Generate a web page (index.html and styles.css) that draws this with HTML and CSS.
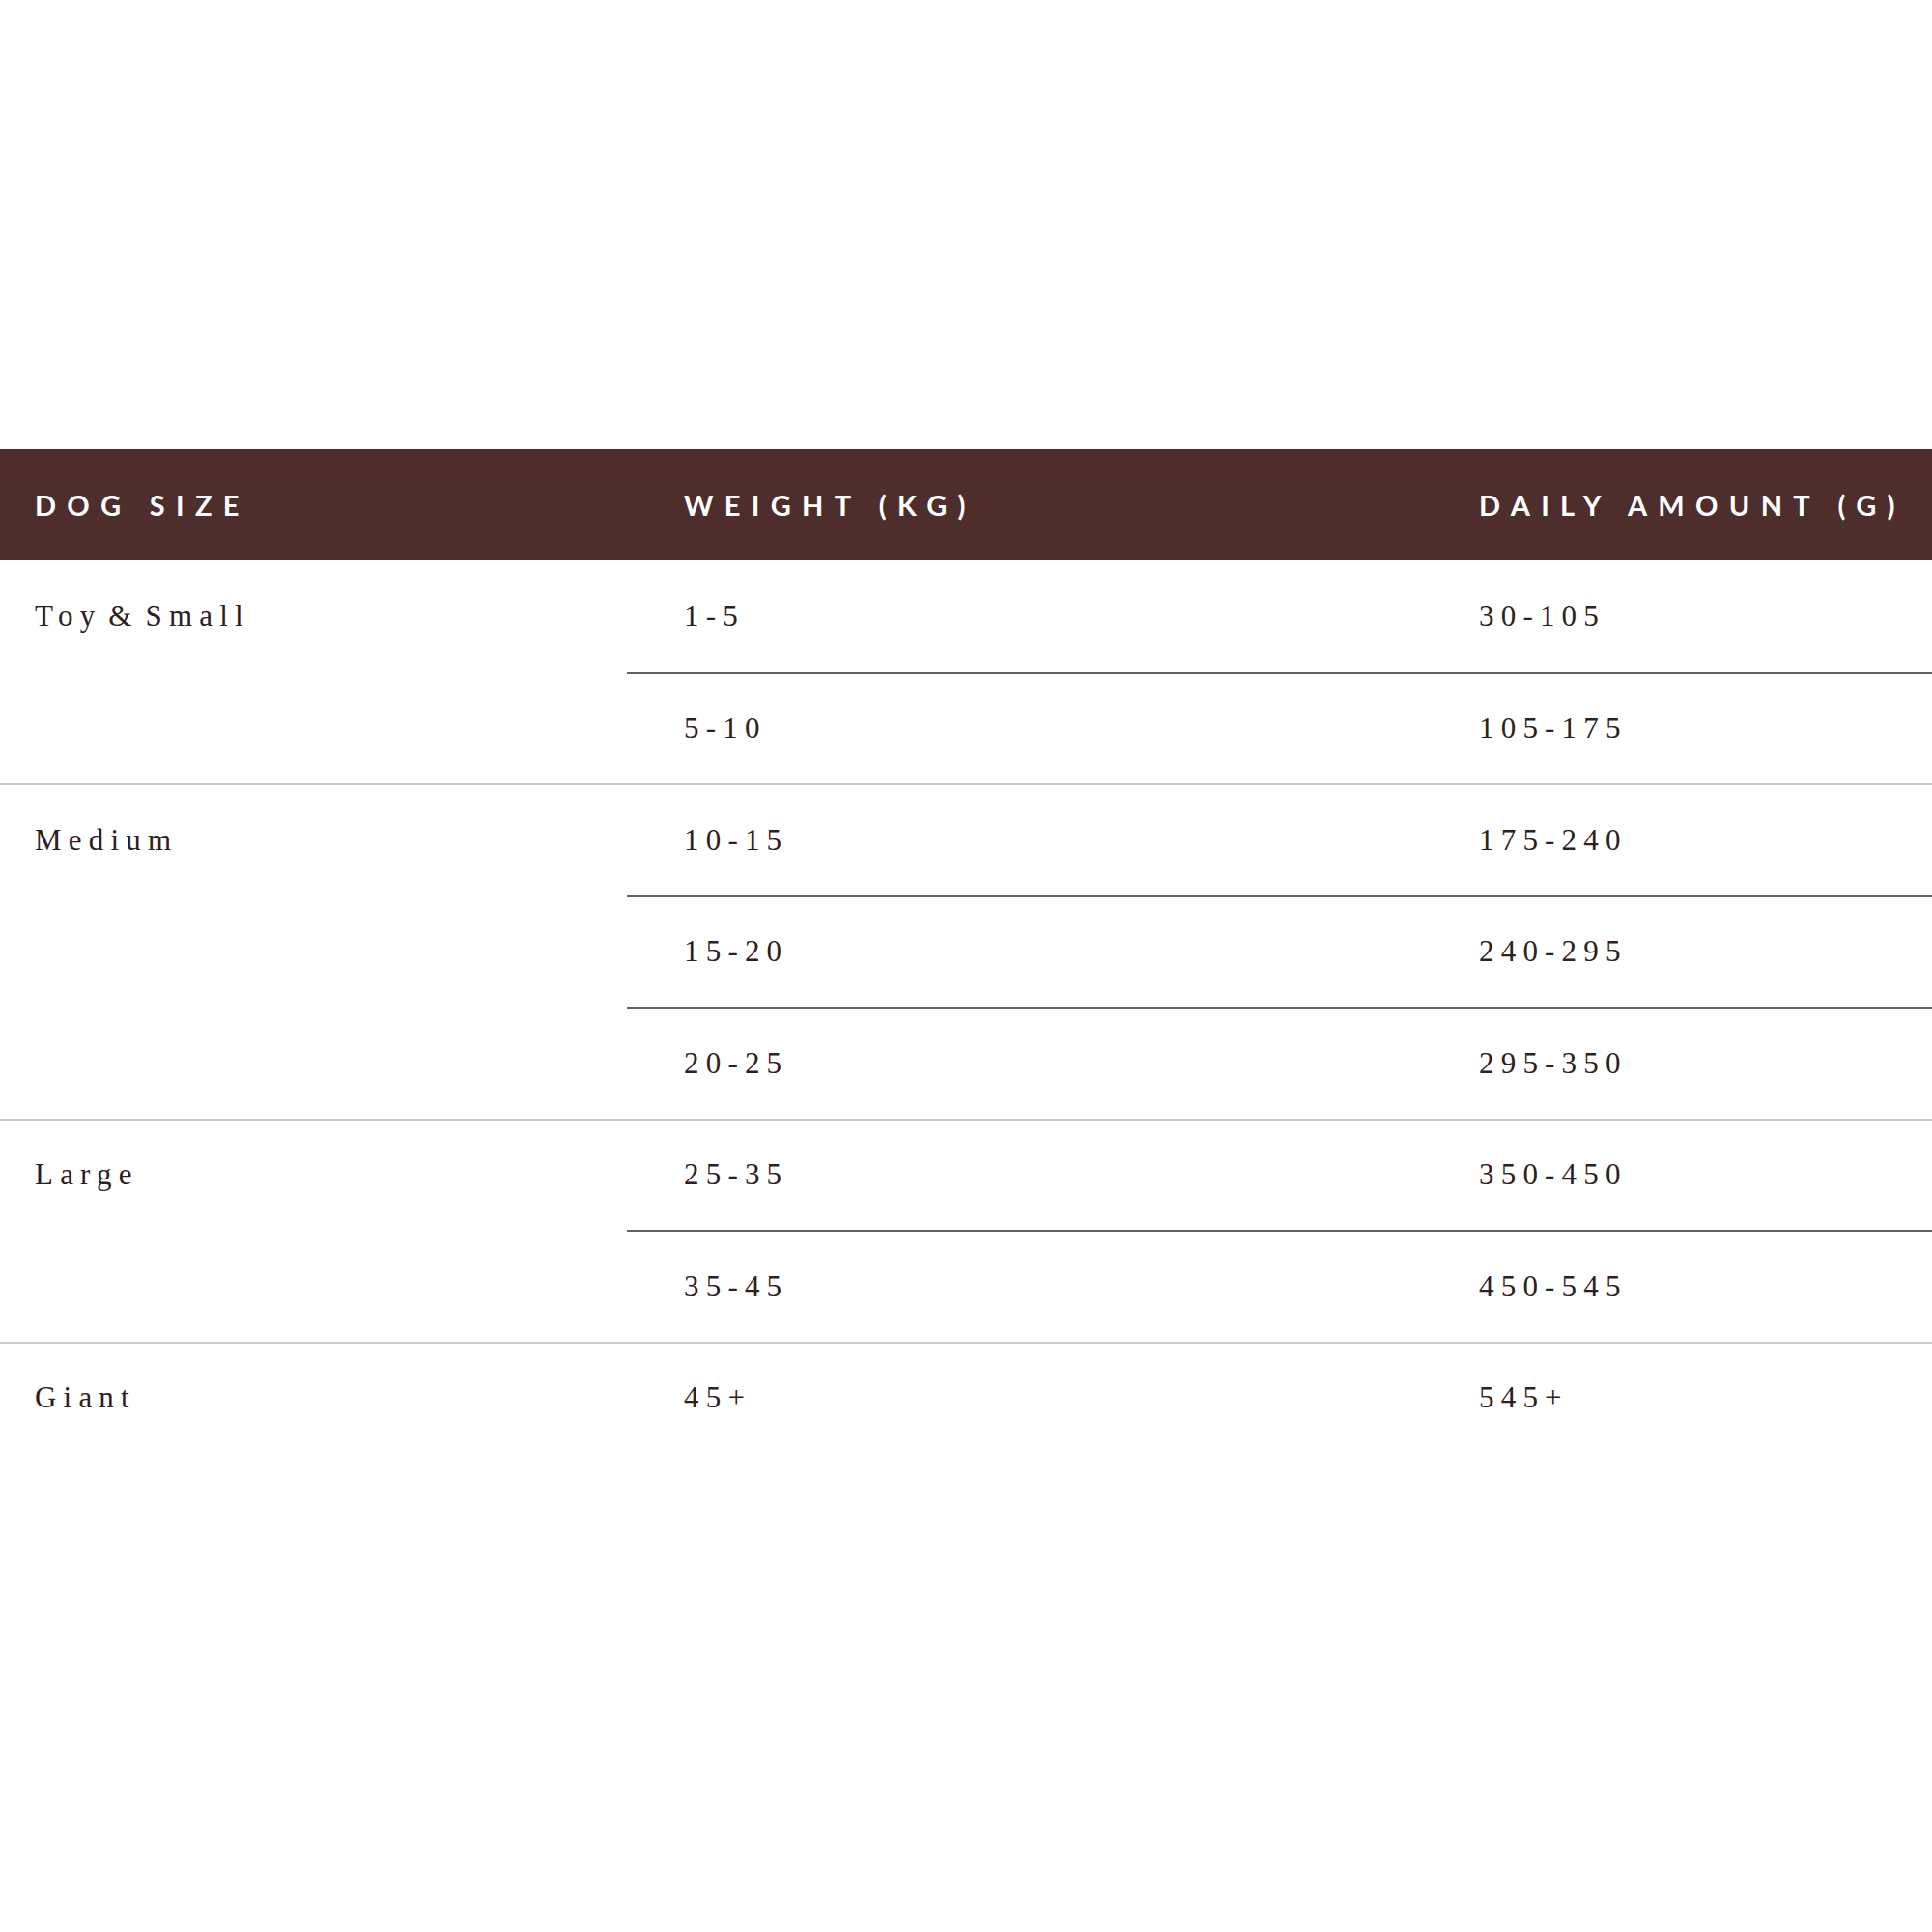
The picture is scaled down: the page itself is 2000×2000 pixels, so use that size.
FILE: index.html
```html
<!DOCTYPE html>
<html lang="en">
<head>
<meta charset="utf-8">
<title>Feeding Guide</title>
<link rel="stylesheet" href="styles.css">
</head>
<body>
<div class="page">
  <div class="table">
    <div class="head">
      <div class="h-size">DOG SIZE</div>
      <div class="h-weight">WEIGHT (KG)</div>
      <div class="h-amount">DAILY AMOUNT (G)</div>
    </div>

    <div class="group">
      <div class="size">Toy &amp; Small</div>
      <div class="subs">
        <div class="sub"><span class="w">1-5</span><span class="a">30-105</span></div>
        <div class="sub"><span class="w">5-10</span><span class="a">105-175</span></div>
      </div>
    </div>

    <div class="group">
      <div class="size">Medium</div>
      <div class="subs">
        <div class="sub"><span class="w">10-15</span><span class="a">175-240</span></div>
        <div class="sub"><span class="w">15-20</span><span class="a">240-295</span></div>
        <div class="sub"><span class="w">20-25</span><span class="a">295-350</span></div>
      </div>
    </div>

    <div class="group">
      <div class="size">Large</div>
      <div class="subs">
        <div class="sub"><span class="w">25-35</span><span class="a">350-450</span></div>
        <div class="sub"><span class="w">35-45</span><span class="a">450-545</span></div>
      </div>
    </div>

    <div class="group">
      <div class="size">Giant</div>
      <div class="subs">
        <div class="sub"><span class="w">45+</span><span class="a">545+</span></div>
      </div>
    </div>
  </div>
</div>
</body>
</html>
```

FILE: styles.css
```css
html, body {
  margin: 0;
  padding: 0;
  background: #ffffff;
}

.page {
  width: 2000px;
  height: 2000px;
  padding-top: 465px;
  box-sizing: border-box;
}

.table {
  width: 2000px;
}

.head {
  display: grid;
  grid-template-columns: 649px 882px 1fr;
  height: 115px;
  align-items: center;
  background: #4e2e2d;
  color: #ffffff;
  font-family: Lato, "DejaVu Sans", sans-serif;
  font-weight: 700;
  font-size: 29px;
  letter-spacing: 11.3px;
  white-space: nowrap;
}

.h-size {
  padding-left: 36px;
}

.h-weight {
  padding-left: 59px;
}

.group {
  display: grid;
  grid-template-columns: 649px 1fr;
  font-family: "Liberation Serif", "Times New Roman", serif;
  font-size: 31px;
  letter-spacing: 7.2px;
  word-spacing: -8px;
  color: #2d2020;
}

.group + .group {
  border-top: 2px solid #cfcbcb;
}

.size {
  padding-left: 36px;
  height: 115px;
  display: flex;
  align-items: center;
}

.group + .group .size {
  height: 113px;
}

.subs {
  display: flex;
  flex-direction: column;
}

.sub {
  display: grid;
  grid-template-columns: 882px 1fr;
  height: 115.5px;
  box-sizing: border-box;
  align-items: center;
}

.group + .group .sub:first-child {
  height: 113.5px;
}

.sub + .sub {
  border-top: 2px solid #6a5f5f;
}

.w {
  padding-left: 59px;
}
```
